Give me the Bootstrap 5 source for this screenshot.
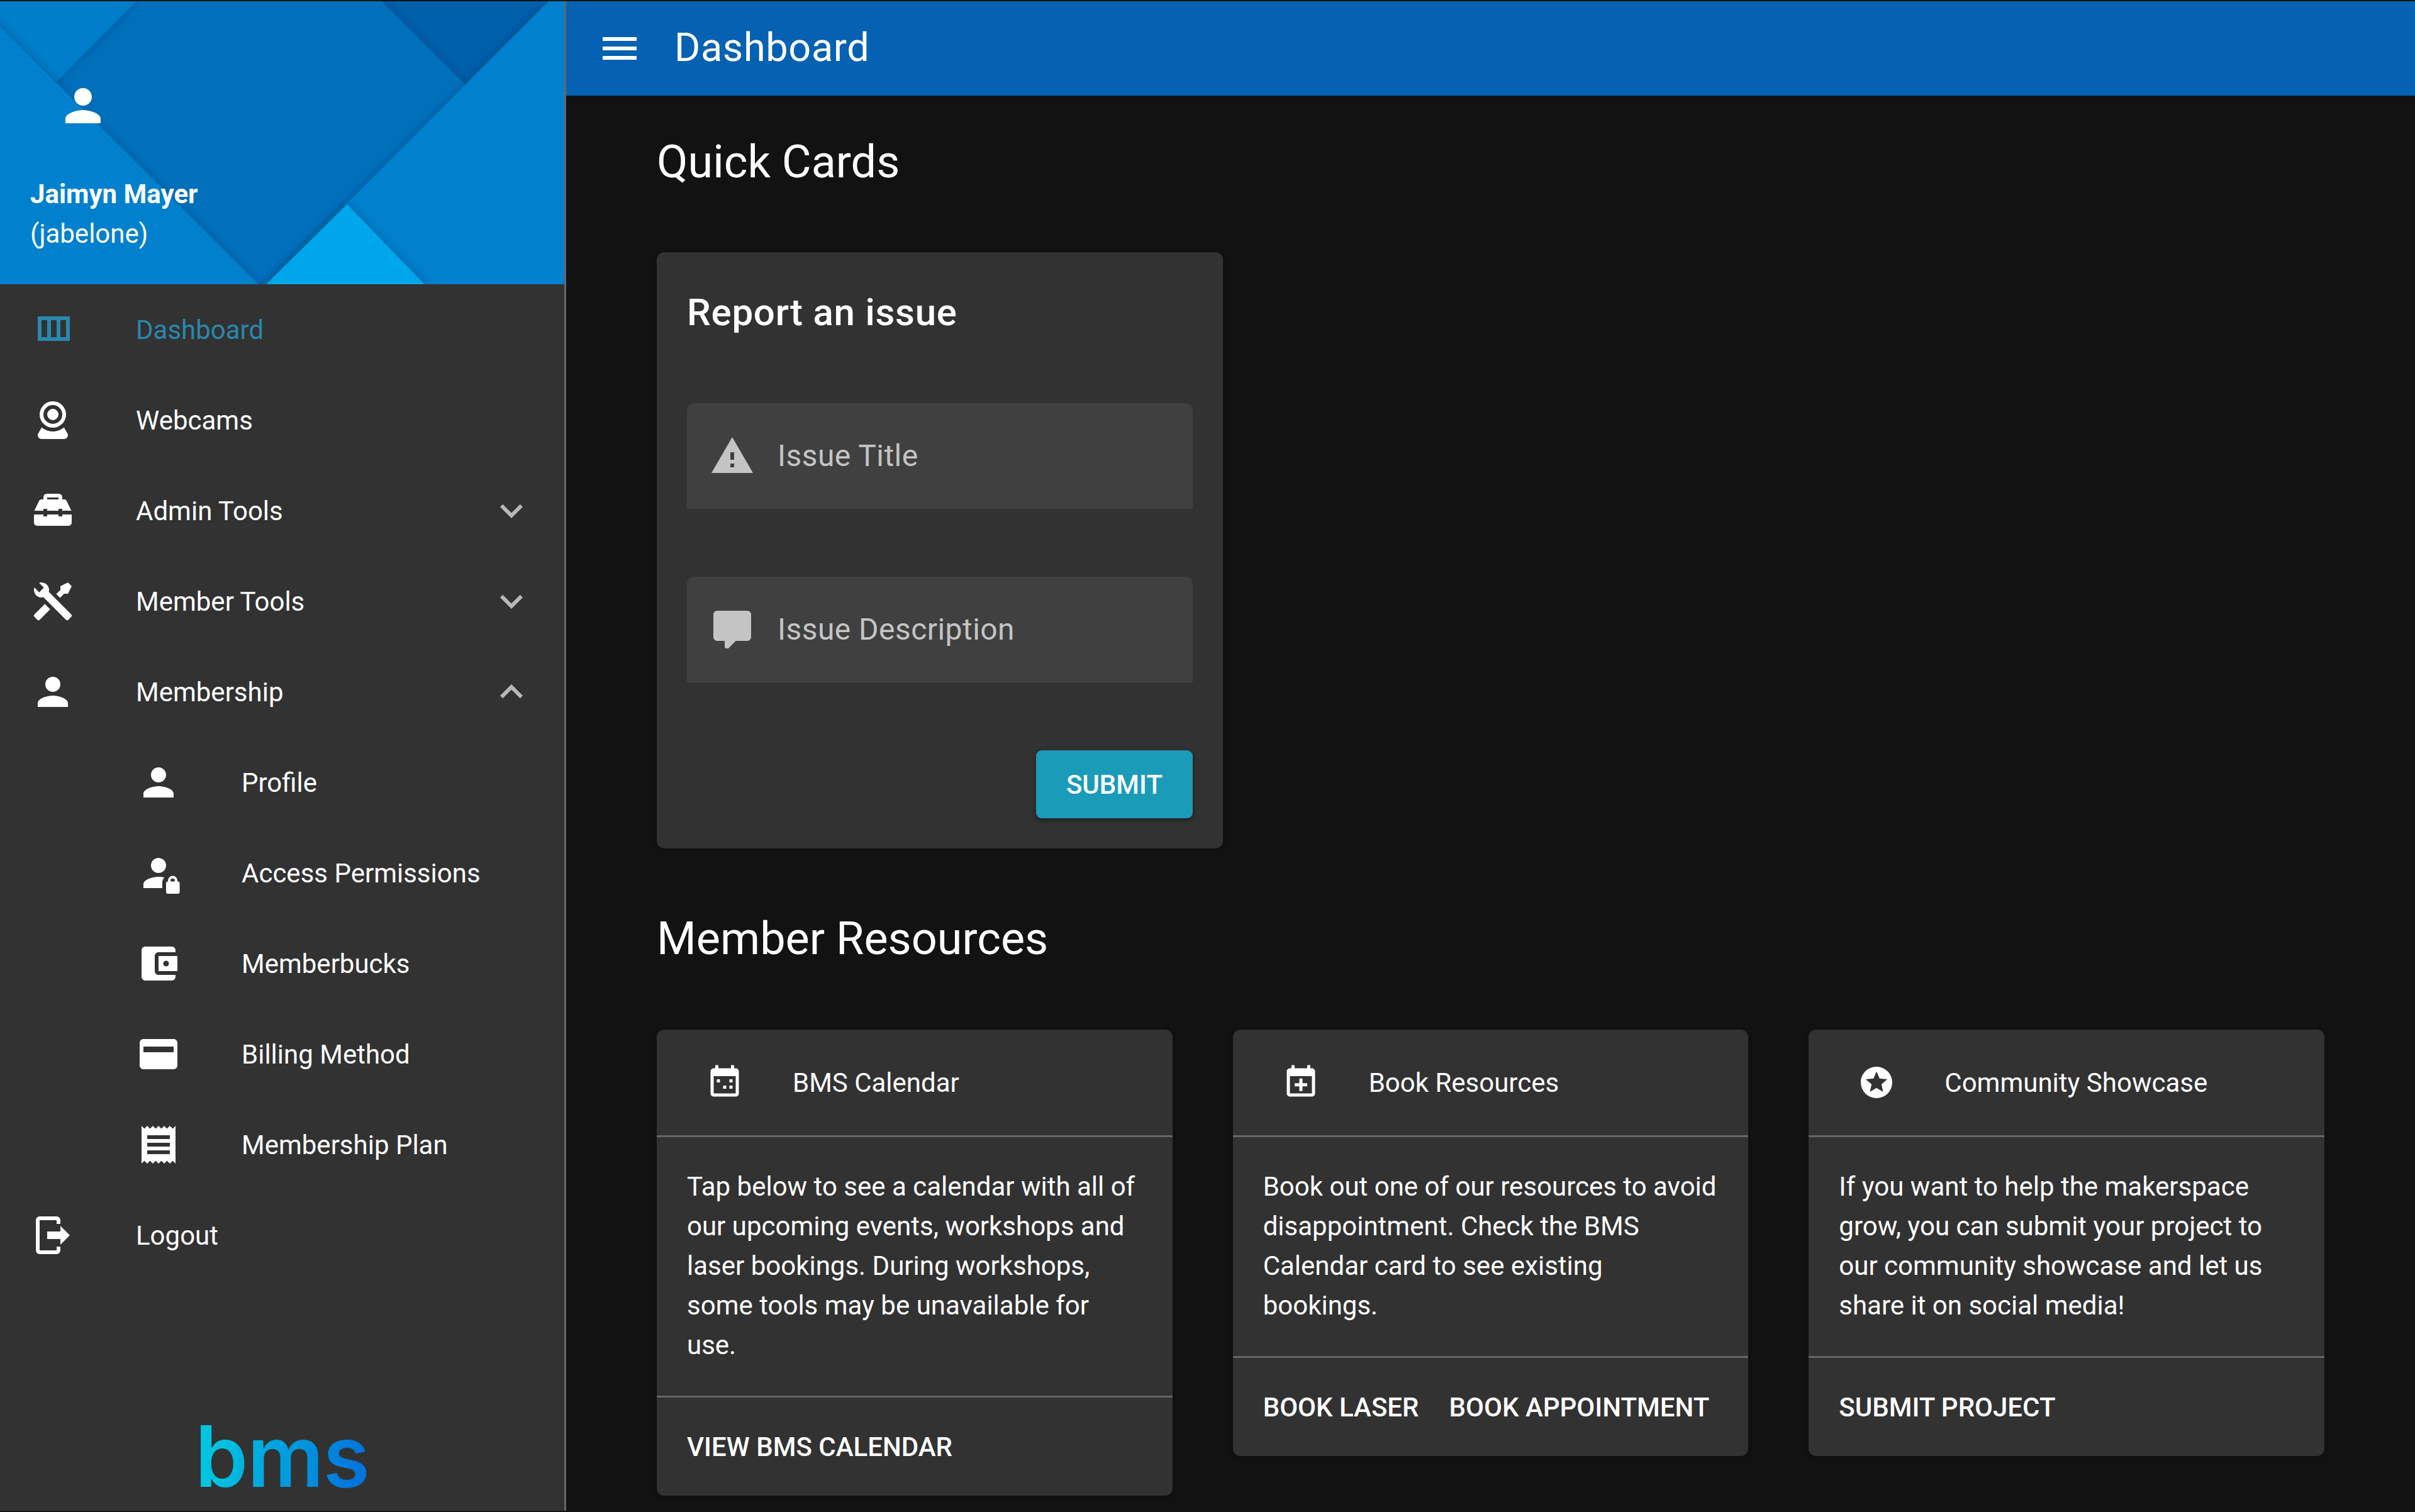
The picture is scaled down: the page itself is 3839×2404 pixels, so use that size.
<!DOCTYPE html>
<html lang="en">
<head>
    <meta charset="UTF-8">
    <meta name="viewport" content="width=device-width, initial-scale=1.0">
    <title>Dashboard</title>
    <link href="https://cdn.jsdelivr.net/npm/bootstrap@5.3.2/dist/css/bootstrap.min.css" rel="stylesheet">
    <style>
        html, body { height: 2404px; overflow: hidden; }
        body { background-color: #121212; color: #fff; padding: 2px 0; font-family: Roboto, "Liberation Sans", sans-serif; font-size: 42px; line-height: 63px; }
        svg { fill: currentColor; flex-shrink: 0; display: block; }

        /* drawer */
        .drawer { width: 900px; height: 2400px; background-color: #323232; border-right: 3px solid #666; }
        .drawer-head { height: 450px; padding: 124px 0 0 48px; overflow: hidden; }
        .drawer-art { top: 0; left: 0; width: 897px; height: 450px; }
        .drawer-avatar { width: 84px; height: 84px; margin: 0 0 67px 42px; }
        .drawer-name { font-weight: 700; }
        .drawer-item { display: flex; align-items: center; height: 144px; padding: 0 48px; background: transparent; border: 0; border-radius: 0; color: #fff; }
        .drawer-item.is-current { color: #2a87ad; }
        .drawer-item.is-sub { padding-left: 216px; }
        .drawer-glyph { width: 72px; height: 72px; margin-right: 96px; }
        .drawer-chevron { width: 72px; height: 72px; margin-left: auto; color: #b8b8b8; }
        .bms-logo { font-family: Inter, sans-serif; font-weight: 600; font-size: 135px; line-height: 135px; letter-spacing: -1px; background: linear-gradient(100deg, #00c4e0 15%, #0075dc 90%); -webkit-background-clip: text; background-clip: text; color: transparent; }
        .bms-wrap { margin-bottom: 19px; }

        /* top bar */
        .top-bar { height: 150px; padding: 0 0 0 49px; background-color: #0561b1; justify-content: flex-start; }
        .top-title { font-size: 63px; letter-spacing: .63px; margin: 0 0 3px 51px; line-height: 90px; }

        /* content */
        .page-body { padding: 58px 144px 0; }
        .section-title { font-size: 72px; line-height: 96px; font-weight: 400; margin: 0; }
        .section-title.first { margin-bottom: 95px; }
        .section-title.second { margin: 96px 0; }
        .panel { background-color: #323232; border: 0; border-radius: 12px; color: #fff; box-shadow: 0 3px 9px rgba(0,0,0,.25); }
        .report-panel { width: 900px; padding: 48px; }
        .report-title { font-size: 60px; line-height: 96px; font-weight: 500; letter-spacing: .75px; margin: 0 0 96px; }
        .field-box { height: 168px; padding-left: 36px; margin-bottom: 108px; background-color: #404040; border-radius: 12px 12px 0 0; color: #c4c4c4; }
        .field-box svg { width: 72px; height: 72px; margin-right: 36px; }
        .field-label { font-size: 48px; letter-spacing: .45px; line-height: 72px; margin: 0 0 1px; }
        .submit-btn { height: 108px; padding: 0 48px; font-size: 42px; font-weight: 500; line-height: 63px; color: #fff; background-color: #1a9bb8; border: 0; border-radius: 9px; box-shadow: 0 3px 9px rgba(0,0,0,.4); }
        .submit-btn:hover { color: #fff; background-color: #1a9bb8; }
        .resource-row { --bs-gutter-x: 96px; }
        .panel .card-header { display: flex; align-items: center; height: 171px; padding: 0 0 0 72px; background: transparent; border-bottom: 3px solid #666; border-radius: 12px 12px 0 0; }
        .head-glyph { width: 72px; padding: 0 6px; box-sizing: border-box; margin-right: 72px; }
        .panel .card-body { padding: 47px 48px 49px; }
        .panel .card-body p { margin: 0; }
        .panel .card-footer { display: flex; padding: 24px; height: 159px; background: transparent; border-top: 3px solid #666; border-radius: 0 0 12px 12px; }
        .flat-btn { height: 108px; padding: 0 24px; font-size: 42px; font-weight: 500; line-height: 63px; color: #fff; border: 0; border-radius: 9px; }
    </style>
</head>
<body>
    <div class="d-flex">
        <!-- Drawer -->
        <aside class="drawer d-flex flex-column flex-shrink-0">
            <div class="drawer-head position-relative">
                <svg class="drawer-art position-absolute" viewBox="0 0 897 450" aria-hidden="true">
                    <defs>
                        <filter id="soft" x="-10%" y="-10%" width="120%" height="120%">
                            <feDropShadow dx="0" dy="0" stdDeviation="7" flood-color="#00254f" flood-opacity=".35"/>
                        </filter>
                    </defs>
                    <rect width="897" height="450" fill="#005fab"/>
                    <polygon filter="url(#soft)" fill="#0070bc" points="0,-200 607,0 739,132 872,0 423,450 411,450 0,40"/>
                    <polygon filter="url(#soft)" fill="#017dc8" points="0,0 217,0 90,128 0,40"/>
                    <polygon filter="url(#soft)" fill="#0180cd" points="-20,20 411,450 -20,450"/>
                    <polygon filter="url(#soft)" fill="#0180cd" points="872,0 920,0 920,470 403,470"/>
                    <polygon filter="url(#soft)" fill="#00a6ec" points="552,323 694,470 403,470 423,450"/>
                </svg>
                <div class="position-relative">
                    <svg class="drawer-avatar" viewBox="0 0 24 24"><path d="M12 12c2.21 0 4-1.79 4-4s-1.79-4-4-4-4 1.79-4 4 1.79 4 4 4zm0 2c-2.67 0-8 1.34-8 4v2h16v-2c0-2.66-5.33-4-8-4z"/></svg>
                    <div class="drawer-name">Jaimyn Mayer</div>
                    <div>(jabelone)</div>
                </div>
            </div>

            <div class="list-group list-group-flush">
                <a class="list-group-item drawer-item is-current">
                    <svg class="drawer-glyph" viewBox="0 0 24 24"><path d="M4 5v13h17V5H4zm10 2v9h-3V7h3zM6 7h3v9H6V7zm13 9h-3V7h3v9z"/></svg>
                    Dashboard
                </a>
                <a class="list-group-item drawer-item">
                    <svg class="drawer-glyph" viewBox="0 0 24 24"><path d="M12,2A7,7 0 0,1 19,9A7,7 0 0,1 12,16A7,7 0 0,1 5,9A7,7 0 0,1 12,2M12,4A5,5 0 0,0 7,9A5,5 0 0,0 12,14A5,5 0 0,0 17,9A5,5 0 0,0 12,4M12,6A3,3 0 0,1 15,9A3,3 0 0,1 12,12A3,3 0 0,1 9,9A3,3 0 0,1 12,6M6,22A2,2 0 0,1 4,20C4,19.62 4.1,19.27 4.29,18.97L6.11,15.81C7.69,17.17 9.75,18 12,18C14.25,18 16.31,17.17 17.89,15.81L19.71,18.97C19.9,19.27 20,19.62 20,20A2,2 0 0,1 18,22H6Z"/></svg>
                    Webcams
                </a>
                <a class="list-group-item drawer-item">
                    <svg class="drawer-glyph" viewBox="0 0 24 24"><path fill-rule="evenodd" d="M2.2 12L4.6 7Q5 6 6 6H7V5Q7 3 9 3H15Q17 3 17 5V6H18Q19 6 19.4 7L21.8 12H17V11H15V12H9V11H7V12ZM9 5V6H15V5ZM2 14H7V15H9V14H15V15H17V14H22V18Q22 20 20 20H4Q2 20 2 18Z"/></svg>
                    Admin Tools
                    <svg class="drawer-chevron" viewBox="0 0 24 24"><path d="M16.59 8.59L12 13.17 7.41 8.59 6 10l6 6 6-6z"/></svg>
                </a>
                <a class="list-group-item drawer-item">
                    <svg class="drawer-glyph" viewBox="0 0 24 24"><path d="M21.71 20.29L20.29 21.71A1 1 0 0 1 18.88 21.71L7 9.85A3.81 3.81 0 0 1 6 10A4 4 0 0 1 2.22 4.7L4.76 7.24L5.29 6.71L6.71 5.29L7.24 4.76L4.7 2.22A4 4 0 0 1 10 6A3.81 3.81 0 0 1 9.85 7L21.71 18.88A1 1 0 0 1 21.71 20.29M2.29 18.88A1 1 0 0 0 2.29 20.29L3.71 21.71A1 1 0 0 0 5.12 21.71L10.59 16.25L7.76 13.42M20 2L16 4V6L13.83 8.17L15.83 10.17L18 8H20L22 4Z"/></svg>
                    Member Tools
                    <svg class="drawer-chevron" viewBox="0 0 24 24"><path d="M16.59 8.59L12 13.17 7.41 8.59 6 10l6 6 6-6z"/></svg>
                </a>
                <a class="list-group-item drawer-item">
                    <svg class="drawer-glyph" viewBox="0 0 24 24"><path d="M12 12c2.21 0 4-1.79 4-4s-1.79-4-4-4-4 1.79-4 4 1.79 4 4 4zm0 2c-2.67 0-8 1.34-8 4v2h16v-2c0-2.66-5.33-4-8-4z"/></svg>
                    Membership
                    <svg class="drawer-chevron" viewBox="0 0 24 24"><path d="M12 8l-6 6 1.41 1.41L12 10.83l4.59 4.58L18 14z"/></svg>
                </a>
                <a class="list-group-item drawer-item is-sub">
                    <svg class="drawer-glyph" viewBox="0 0 24 24"><path d="M12 12c2.21 0 4-1.79 4-4s-1.79-4-4-4-4 1.79-4 4 1.79 4 4 4zm0 2c-2.67 0-8 1.34-8 4v2h16v-2c0-2.66-5.33-4-8-4z"/></svg>
                    Profile
                </a>
                <a class="list-group-item drawer-item is-sub">
                    <svg class="drawer-glyph" viewBox="0 0 24 24"><circle cx="12" cy="8" r="4"/><path d="M4 20V18C4 15.3 9.3 14 12 14C13 14 14.1 14.15 15.2 14.4C14.4 15 14 16 14 17V20Z"/><path fill-rule="evenodd" d="M17 16.5V16a2.5 2.5 0 0 1 5 0v.5h.2a1 1 0 0 1 1 1V22a1 1 0 0 1-1 1H17a1 1 0 0 1-1-1V17.5a1 1 0 0 1 1-1ZM18.4 16.5h2.2V16a1.1 1.1 0 0 0-2.2 0Z"/></svg>
                    Access Permissions
                </a>
                <a class="list-group-item drawer-item is-sub">
                    <svg class="drawer-glyph" viewBox="0 0 24 24"><path d="M21 18v1c0 1.1-.9 2-2 2H5c-1.11 0-2-.9-2-2V5c0-1.1.89-2 2-2h14c1.1 0 2 .9 2 2v1h-9c-1.11 0-2 .9-2 2v8c0 1.1.89 2 2 2h9zm-9-2h10V8H12v8zm4-2.5c-.83 0-1.5-.67-1.5-1.5s.67-1.5 1.5-1.5 1.5.67 1.5 1.5-.67 1.5-1.5 1.5z"/></svg>
                    Memberbucks
                </a>
                <a class="list-group-item drawer-item is-sub">
                    <svg class="drawer-glyph" viewBox="0 0 24 24"><path fill-rule="evenodd" d="M20 4H4c-1.1 0-2 .9-2 2v12c0 1.1.9 2 2 2h16c1.1 0 2-.9 2-2V6c0-1.1-.9-2-2-2zM20 8v3H4V8z"/></svg>
                    Billing Method
                </a>
                <a class="list-group-item drawer-item is-sub">
                    <svg class="drawer-glyph" viewBox="0 0 24 24"><path d="M18 17H6v-2h12v2zm0-4H6v-2h12v2zm0-4H6V7h12v2zM3 22l1.5-1.5L6 22l1.5-1.5L9 22l1.5-1.5L12 22l1.5-1.5L15 22l1.5-1.5L18 22l1.5-1.5L21 22V2l-1.5 1.5L18 2l-1.5 1.5L15 2l-1.5 1.5L12 2l-1.5 1.5L9 2 7.5 3.5 6 2 4.5 3.5 3 2v20z"/></svg>
                    Membership Plan
                </a>
                <a class="list-group-item drawer-item">
                    <svg class="drawer-glyph" viewBox="0 0 24 24"><path d="M5 2H14a2 2 0 0 1 2 2V6H14V4H5V20H14V18H16V20a2 2 0 0 1-2 2H5a2 2 0 0 1-2-2V4a2 2 0 0 1 2-2ZM9 10H16V7L21 12L16 17V14H9Z"/></svg>
                    Logout
                </a>
            </div>

            <div class="bms-wrap mt-auto text-center"><span class="bms-logo">bms</span></div>
        </aside>

        <!-- Contenu -->
        <div class="flex-grow-1">
            <nav class="navbar top-bar">
                <svg width="72" height="72" viewBox="0 0 24 24"><path d="M3 18h18v-2H3v2zm0-5h18v-2H3v2zm0-7v2h18V6H3z"/></svg>
                <div class="top-title">Dashboard</div>
            </nav>

            <main class="page-body">
                <h2 class="section-title first">Quick Cards</h2>

                <div class="card panel report-panel">
                    <h3 class="report-title">Report an issue</h3>
                    <div class="field-box d-flex align-items-center">
                        <svg viewBox="0 0 24 24"><path d="M1 21h22L12 2 1 21zm12-3h-2v-2h2v2zm0-4h-2v-4h2v4z"/></svg>
                        <label class="field-label">Issue Title</label>
                    </div>
                    <div class="field-box d-flex align-items-center">
                        <svg viewBox="0 0 24 24"><path d="M9,22A1,1 0 0,1 8,21V18H4A2,2 0 0,1 2,16V4C2,2.89 2.9,2 4,2H20A2,2 0 0,1 22,4V16A2,2 0 0,1 20,18H13.9L10.2,21.71C10,21.9 9.75,22 9.5,22V22H9Z"/></svg>
                        <label class="field-label">Issue Description</label>
                    </div>
                    <div class="d-flex justify-content-end">
                        <button class="btn submit-btn text-uppercase">Submit</button>
                    </div>
                </div>

                <h2 class="section-title second">Member Resources</h2>

                <div class="row resource-row align-items-start">
                    <div class="col-4">
                        <div class="card panel">
                            <div class="card-header">
                                <svg class="head-glyph" viewBox="0 0 24 24"><path fill-rule="evenodd" d="M6 1H8V3H16V1H18V3H19C20.1 3 21 3.9 21 5V19C21 20.1 20.1 21 19 21H5C3.9 21 3 20.1 3 19V5C3 3.9 3.9 3 5 3H6ZM5 8V19H19V8ZM7 10H9V12H7ZM15 10H17V12H15ZM11 14H13V16H11ZM15 14H17V16H15Z"/></svg>
                                BMS Calendar
                            </div>
                            <div class="card-body">
                                <p>Tap below to see a calendar with all of our upcoming events, workshops and laser bookings. During workshops, some tools may be unavailable for use.</p>
                            </div>
                            <div class="card-footer">
                                <button class="btn flat-btn text-uppercase">View BMS Calendar</button>
                            </div>
                        </div>
                    </div>
                    <div class="col-4">
                        <div class="card panel">
                            <div class="card-header">
                                <svg class="head-glyph" viewBox="0 0 24 24"><path d="M19 19V8H5V19H19M16 1H18V3H19C20.11 3 21 3.9 21 5V19C21 20.11 20.11 21 19 21H5C3.89 21 3 20.1 3 19V5C3 3.89 3.9 3 5 3H6V1H8V3H16V1M11 9.5H13V12.5H16V14.5H13V17.5H11V14.5H8V12.5H11V9.5Z"/></svg>
                                Book Resources
                            </div>
                            <div class="card-body">
                                <p>Book out one of our resources to avoid disappointment. Check the BMS Calendar card to see existing bookings.</p>
                            </div>
                            <div class="card-footer">
                                <button class="btn flat-btn text-uppercase">Book Laser</button>
                                <button class="btn flat-btn text-uppercase">Book Appointment</button>
                            </div>
                        </div>
                    </div>
                    <div class="col-4">
                        <div class="card panel">
                            <div class="card-header">
                                <svg class="head-glyph" viewBox="0 0 24 24"><path d="M16.23,18L12,15.45L7.77,18L8.89,13.19L5.16,9.96L10.08,9.54L12,5L13.92,9.53L18.84,9.95L15.11,13.18L16.23,18M12,2C6.47,2 2,6.5 2,12A10,10 0 0,0 12,22A10,10 0 0,0 22,12A10,10 0 0,0 12,2Z"/></svg>
                                Community Showcase
                            </div>
                            <div class="card-body">
                                <p>If you want to help the makerspace grow, you can submit your project to our community showcase and let us share it on social media!</p>
                            </div>
                            <div class="card-footer">
                                <button class="btn flat-btn text-uppercase">Submit Project</button>
                            </div>
                        </div>
                    </div>
                </div>
            </main>
        </div>
    </div>
    <script src="https://cdn.jsdelivr.net/npm/bootstrap@5.3.2/dist/js/bootstrap.bundle.min.js"></script>
</body>
</html>
